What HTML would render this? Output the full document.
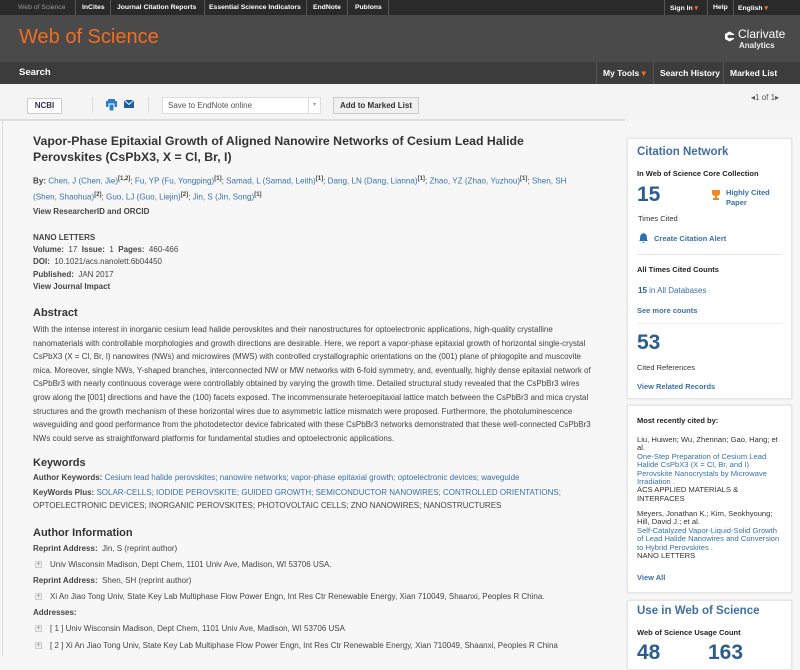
<!DOCTYPE html>
<html><head><meta charset="utf-8"><style>
*{margin:0;padding:0;box-sizing:border-box}
body{width:800px;height:656px;overflow:hidden;background:#f7f7f7;font-family:"Liberation Sans",Arial,sans-serif;position:relative;color:#333}
.a{position:absolute;white-space:nowrap}
.tb{font-size:6.8px;font-weight:bold;color:#fff;top:4px}
.sep{position:absolute;width:1px;background:#555}
.l{color:#3a70a6}
.b{font-weight:bold}
.t{font-size:8px;color:#444}
.h{font-size:11px;font-weight:bold;color:#333}
.box{position:absolute;background:#fff;border:1px solid #e6e6e6;box-shadow:0 0 2px #ddd}
sup{font-size:6px;font-weight:bold;color:#444}
.plus{display:inline-block;width:7px;height:7px;border:1px solid #ccc;background:#eee;font-size:7px;line-height:5px;text-align:center;color:#888;margin-right:8px;vertical-align:middle}
</style></head><body>
<div class="a" style="left:0;top:0;width:800px;height:15px;background:#2a2a2a"></div>
<div class="a tb" style="left:18px;color:#999;font-weight:normal">Web of Science</div>
<div class="sep" style="left:75px;top:0;height:15px"></div>
<div class="a tb" style="left:82px">InCites</div>
<div class="sep" style="left:110px;top:0;height:15px"></div>
<div class="a tb" style="left:117px">Journal Citation Reports</div>
<div class="sep" style="left:204px;top:0;height:15px"></div>
<div class="a tb" style="left:209px">Essential Science Indicators</div>
<div class="sep" style="left:306px;top:0;height:15px"></div>
<div class="a tb" style="left:313px">EndNote</div>
<div class="sep" style="left:347px;top:0;height:15px"></div>
<div class="a tb" style="left:355px">Publons</div>
<div class="sep" style="left:388px;top:0;height:15px"></div>
<div class="sep" style="left:664px;top:0;height:15px"></div>
<div class="a tb" style="left:670px">Sign In <span style="color:#f26d21">▾</span></div>
<div class="sep" style="left:707px;top:0;height:15px"></div>
<div class="a tb" style="left:713px">Help</div>
<div class="sep" style="left:733px;top:0;height:15px"></div>
<div class="a tb" style="left:738px">English <span style="color:#f26d21">▾</span></div>
<div class="a" style="left:0;top:15px;width:800px;height:47px;background:#4a4a4a"></div>
<div class="a" style="left:19px;top:26px;font-size:20px;color:#f26d21">Web of Science</div>
<svg class="a" style="left:724px;top:31px" width="11" height="11" viewBox="0 0 11 11"><path d="M5.5 0.5 L10 3 L10 8 L5.5 10.5 L1 8 L1 3Z" fill="#fff"/><path d="M5.5 3.5 L8 5 L8 6 L5.5 7.5 L3.5 6.2 L3.5 4.8Z" fill="#4a4a4a"/><rect x="7" y="4" width="4" height="3" fill="#4a4a4a"/></svg>
<div class="a" style="left:738px;top:27px;font-size:12px;color:#fff">Clarivate</div>
<div class="a" style="left:739px;top:41px;font-size:8px;color:#eee;font-weight:bold">Analytics</div>
<div class="a" style="left:0;top:62px;width:800px;height:22px;background:#3c3c3c"></div>
<div class="a" style="left:19px;top:67px;font-size:9.5px;font-weight:bold;color:#fff">Search</div>
<div class="sep" style="left:596px;top:62px;height:22px"></div>
<div class="a" style="left:603px;top:68px;font-size:8.5px;font-weight:bold;color:#fff">My Tools <span style="color:#f26d21">▾</span></div>
<div class="sep" style="left:653px;top:62px;height:22px"></div>
<div class="a" style="left:660px;top:68px;font-size:8.5px;font-weight:bold;color:#fff">Search History</div>
<div class="sep" style="left:723px;top:62px;height:22px"></div>
<div class="a" style="left:730px;top:68px;font-size:8.5px;font-weight:bold;color:#fff">Marked List</div>
<div class="a" style="left:0;top:84px;width:800px;height:36px;background:#f4f4f4"></div>
<div class="a" style="left:27px;top:98px;width:35px;height:16px;border:1px solid #ccc;background:#fff;font-size:8px;font-weight:bold;color:#335;text-align:center;line-height:14px">NCBI</div>
<div class="sep" style="left:92px;top:97px;height:16px;background:#ddd"></div>
<svg class="a" style="left:106px;top:99px" width="11" height="12"><rect x="0" y="2" width="11" height="6" fill="#2a7fc4"/><rect x="2" y="0" width="7" height="3" fill="#2a7fc4"/><rect x="3" y="5" width="5" height="7" fill="#2a7fc4" stroke="#fff"/></svg>
<svg class="a" style="left:124px;top:100px" width="10" height="8"><rect width="10" height="8" fill="#1d5fa0"/><path d="M0 0 L5 4.5 L10 0" stroke="#fff" fill="none"/></svg>
<div class="sep" style="left:148px;top:97px;height:16px;background:#ddd"></div>
<div class="a" style="left:162px;top:97px;width:159px;height:17px;border:1px solid #ddd;background:#fff;font-size:8px;color:#555;padding:3px 0 0 5px">Save to EndNote online<span style="position:absolute;right:0;top:0;width:12px;height:15px;border-left:1px solid #ddd;font-size:6px;text-align:center;line-height:15px;color:#999">▾</span></div>
<div class="a" style="left:333px;top:97px;width:86px;height:17px;border:1px solid #ccc;background:#f0f0f0;font-size:8px;font-weight:bold;color:#333;text-align:center;line-height:15px">Add to Marked List</div>
<div class="a" style="left:751px;top:93px;font-size:8px;color:#555">◂1 of 1▸</div>
<div class="a" style="left:0;top:119px;width:625px;height:2px;background:#ddd"></div>
<div class="a" style="left:2px;top:121px;width:1px;height:535px;background:#ddd"></div>

<div class="a" style="left:33px;top:133px;font-size:12.3px;font-weight:bold;color:#333;line-height:16px">Vapor-Phase Epitaxial Growth of Aligned Nanowire Networks of Cesium Lead Halide<br>Perovskites (CsPbX3, X = Cl, Br, I)</div>
<div class="a t" style="left:33px;top:176px;font-size:8.1px"><b>By:</b> <span class="l">Chen, J (Chen, Jie)</span><sup>[1,2]</sup>; <span class="l">Fu, YP (Fu, Yongping)</span><sup>[1]</sup>; <span class="l">Samad, L (Samad, Leith)</span><sup>[1]</sup>; <span class="l">Dang, LN (Dang, Lianna)</span><sup>[1]</sup>; <span class="l">Zhao, YZ (Zhao, Yuzhou)</span><sup>[1]</sup>; <span class="l">Shen, SH</span></div>
<div class="a t" style="left:33px;top:192px;font-size:8.1px"><span class="l">(Shen, Shaohua)</span><sup>[2]</sup>; <span class="l">Guo, LJ (Guo, Liejin)</span><sup>[2]</sup>; <span class="l">Jin, S (Jin, Song)</span><sup>[1]</sup></div>
<div class="a t b l" style="left:33px;top:207px">View ResearcherID and ORCID</div>
<div class="a t b" style="left:33px;top:233px">NANO LETTERS</div>
<div class="a t" style="left:33px;top:245px"><b>Volume:</b>&nbsp; 17 &nbsp;<b>Issue:</b>&nbsp; 1 &nbsp;<b>Pages:</b>&nbsp; 460-466</div>
<div class="a t" style="left:33px;top:257px"><b>DOI:</b>&nbsp; 10.1021/acs.nanolett.6b04450</div>
<div class="a t" style="left:33px;top:270px"><b>Published:</b>&nbsp; JAN 2017</div>
<div class="a t b l" style="left:33px;top:282px">View Journal Impact</div>

<div class="a h" style="left:33px;top:307px">Abstract</div>
<div class="a t" style="left:33px;top:323px;line-height:13.6px">With the intense interest in inorganic cesium lead halide perovskites and their nanostructures for optoelectronic applications, high-quality crystalline<br>nanomaterials with controllable morphologies and growth directions are desirable. Here, we report a vapor-phase epitaxial growth of horizontal single-crystal<br>CsPbX3 (X = Cl, Br, I) nanowires (NWs) and microwires (MWS) with controlled crystallographic orientations on the (001) plane of phlogopite and muscovite<br>mica. Moreover, single NWs, Y-shaped branches, interconnected NW or MW networks with 6-fold symmetry, and, eventually, highly dense epitaxial network of<br>CsPbBr3 with nearly continuous coverage were controllably obtained by varying the growth time. Detailed structural study revealed that the CsPbBr3 wires<br>grow along the [001] directions and have the (100) facets exposed. The incommensurate heteroepitaxial lattice match between the CsPbBr3 and mica crystal<br>structures and the growth mechanism of these horizontal wires due to asymmetric lattice mismatch were proposed. Furthermore, the photoluminescence<br>waveguiding and good performance from the photodetector device fabricated with these CsPbBr3 networks demonstrated that these well-connected CsPbBr3<br>NWs could serve as straightforward platforms for fundamental studies and optoelectronic applications.</div>

<div class="a h" style="left:33px;top:457px">Keywords</div>
<div class="a t" style="left:33px;top:473px"><b>Author Keywords:</b> <span class="l">Cesium lead halide perovskites; nanowire networks; vapor-phase epitaxial growth; optoelectronic devices; waveguide</span></div>
<div class="a t" style="left:33px;top:488px"><b>KeyWords Plus:</b> <span class="l">SOLAR-CELLS; IODIDE PEROVSKITE; GUIDED GROWTH; SEMICONDUCTOR NANOWIRES; CONTROLLED ORIENTATIONS;</span></div>
<div class="a t l" style="left:33px;top:501px">OPTOELECTRONIC DEVICES; INORGANIC PEROVSKITES; PHOTOVOLTAIC CELLS; ZNO NANOWIRES; NANOSTRUCTURES</div>
<div class="a h" style="left:33px;top:527px">Author Information</div>
<div class="a t" style="left:33px;top:544px"><b>Reprint Address:</b>&nbsp; Jin, S (reprint author)</div>
<div class="a t" style="left:35px;top:560px"><span class="plus">+</span>Univ Wisconsin Madison, Dept Chem, 1101 Univ Ave, Madison, WI 53706 USA.</div>
<div class="a t" style="left:33px;top:576px"><b>Reprint Address:</b>&nbsp; Shen, SH (reprint author)</div>
<div class="a t" style="left:35px;top:592px"><span class="plus">+</span>Xi An Jiao Tong Univ, State Key Lab Multiphase Flow Power Engn, Int Res Ctr Renewable Energy, Xian 710049, Shaanxi, Peoples R China.</div>
<div class="a t b" style="left:33px;top:608px">Addresses:</div>
<div class="a t" style="left:35px;top:624px"><span class="plus">+</span>[ 1 ] Univ Wisconsin Madison, Dept Chem, 1101 Univ Ave, Madison, WI 53706 USA</div>
<div class="a t" style="left:35px;top:641px"><span class="plus">+</span>[ 2 ] Xi An Jiao Tong Univ, State Key Lab Multiphase Flow Power Engn, Int Res Ctr Renewable Energy, Xian 710049, Shaanxi, Peoples R China</div>

<div class="box" style="left:627px;top:138px;width:165px;height:261px"></div>
<div class="a" style="left:637px;top:146px;font-size:11.5px;font-weight:bold;color:#3f6fa0">Citation Network</div>
<div class="a" style="left:637px;top:169px;font-size:7.5px;font-weight:bold;color:#222">In Web of Science Core Collection</div>
<div class="a" style="left:637px;top:183px;font-size:21px;font-weight:bold;color:#2d5d8c">15</div>
<svg class="a" style="left:711px;top:190px" width="10" height="10"><path d="M1 0H9V3Q9 6 5 6Q1 6 1 3Z M4 6H6V8H8V10H2V8H4Z" fill="#f08a1c"/></svg>
<div class="a" style="left:726px;top:188px;font-size:7.5px;font-weight:bold;color:#3a70a6;line-height:10px">Highly Cited<br>Paper</div>
<div class="a" style="left:638px;top:214px;font-size:7.5px;color:#333">Times Cited</div>
<svg class="a" style="left:639px;top:233px" width="9" height="10"><path d="M4.5 0Q8 1 8 5V7L9 8H0L1 7V5Q1 1 4.5 0Z M3 9H6L4.5 10Z" fill="#2a6fb8"/></svg>
<div class="a" style="left:654px;top:234px;font-size:7.5px;font-weight:bold;color:#3a70a6">Create Citation Alert</div>
<div class="a" style="left:637px;top:254px;width:145px;height:1px;background:#e5e5e5"></div>
<div class="a" style="left:637px;top:265px;font-size:7.5px;font-weight:bold;color:#222">All Times Cited Counts</div>
<div class="a" style="left:638px;top:286px;font-size:8px;color:#3a70a6"><b style="color:#2d5d8c">15</b> in All Databases</div>
<div class="a" style="left:637px;top:306px;font-size:7.5px;font-weight:bold;color:#3a70a6">See more counts</div>
<div class="a" style="left:637px;top:323px;width:145px;height:1px;background:#eee"></div>
<div class="a" style="left:637px;top:331px;font-size:21px;font-weight:bold;color:#2d5d8c">53</div>
<div class="a" style="left:637px;top:363px;font-size:7.5px;color:#333">Cited References</div>
<div class="a" style="left:637px;top:382px;font-size:7.5px;font-weight:bold;color:#3a70a6">View Related Records</div>

<div class="box" style="left:627px;top:405px;width:165px;height:188px"></div>
<div class="a" style="left:637px;top:416px;font-size:7.5px;font-weight:bold;color:#222">Most recently cited by:</div>
<div class="a" style="left:637px;top:436px;font-size:7.6px;line-height:8.4px;color:#333">Liu, Huiwen; Wu, Zhennan; Gao, Hang; et<br>al.<br><span class="l">One-Step Preparation of Cesium Lead<br>Halide CsPbX3 (X = Cl, Br, and I)<br>Perovskite Nanocrystals by Microwave<br>Irradiation .</span><br>ACS APPLIED MATERIALS &amp;<br>INTERFACES</div>
<div class="a" style="left:637px;top:510px;font-size:7.6px;line-height:8.4px;color:#333">Meyers, Jonathan K.; Kim, Seokhyoung;<br>Hill, David J.; et al.<br><span class="l">Self-Catalyzed Vapor-Liquid-Solid Growth<br>of Lead Halide Nanowires and Conversion<br>to Hybrid Perovskites .</span><br>NANO LETTERS</div>
<div class="a" style="left:637px;top:573px;font-size:7.5px;font-weight:bold;color:#3a70a6">View All</div>

<div class="box" style="left:627px;top:600px;width:165px;height:70px"></div>
<div class="a" style="left:637px;top:605px;font-size:11.5px;font-weight:bold;color:#3f6fa0">Use in Web of Science</div>
<div class="a" style="left:637px;top:628px;font-size:7.5px;font-weight:bold;color:#222">Web of Science Usage Count</div>
<div class="a" style="left:637px;top:641px;font-size:21px;font-weight:bold;color:#2d5d8c">48</div>
<div class="a" style="left:708px;top:641px;font-size:21px;font-weight:bold;color:#2d5d8c">163</div>
</body></html>
